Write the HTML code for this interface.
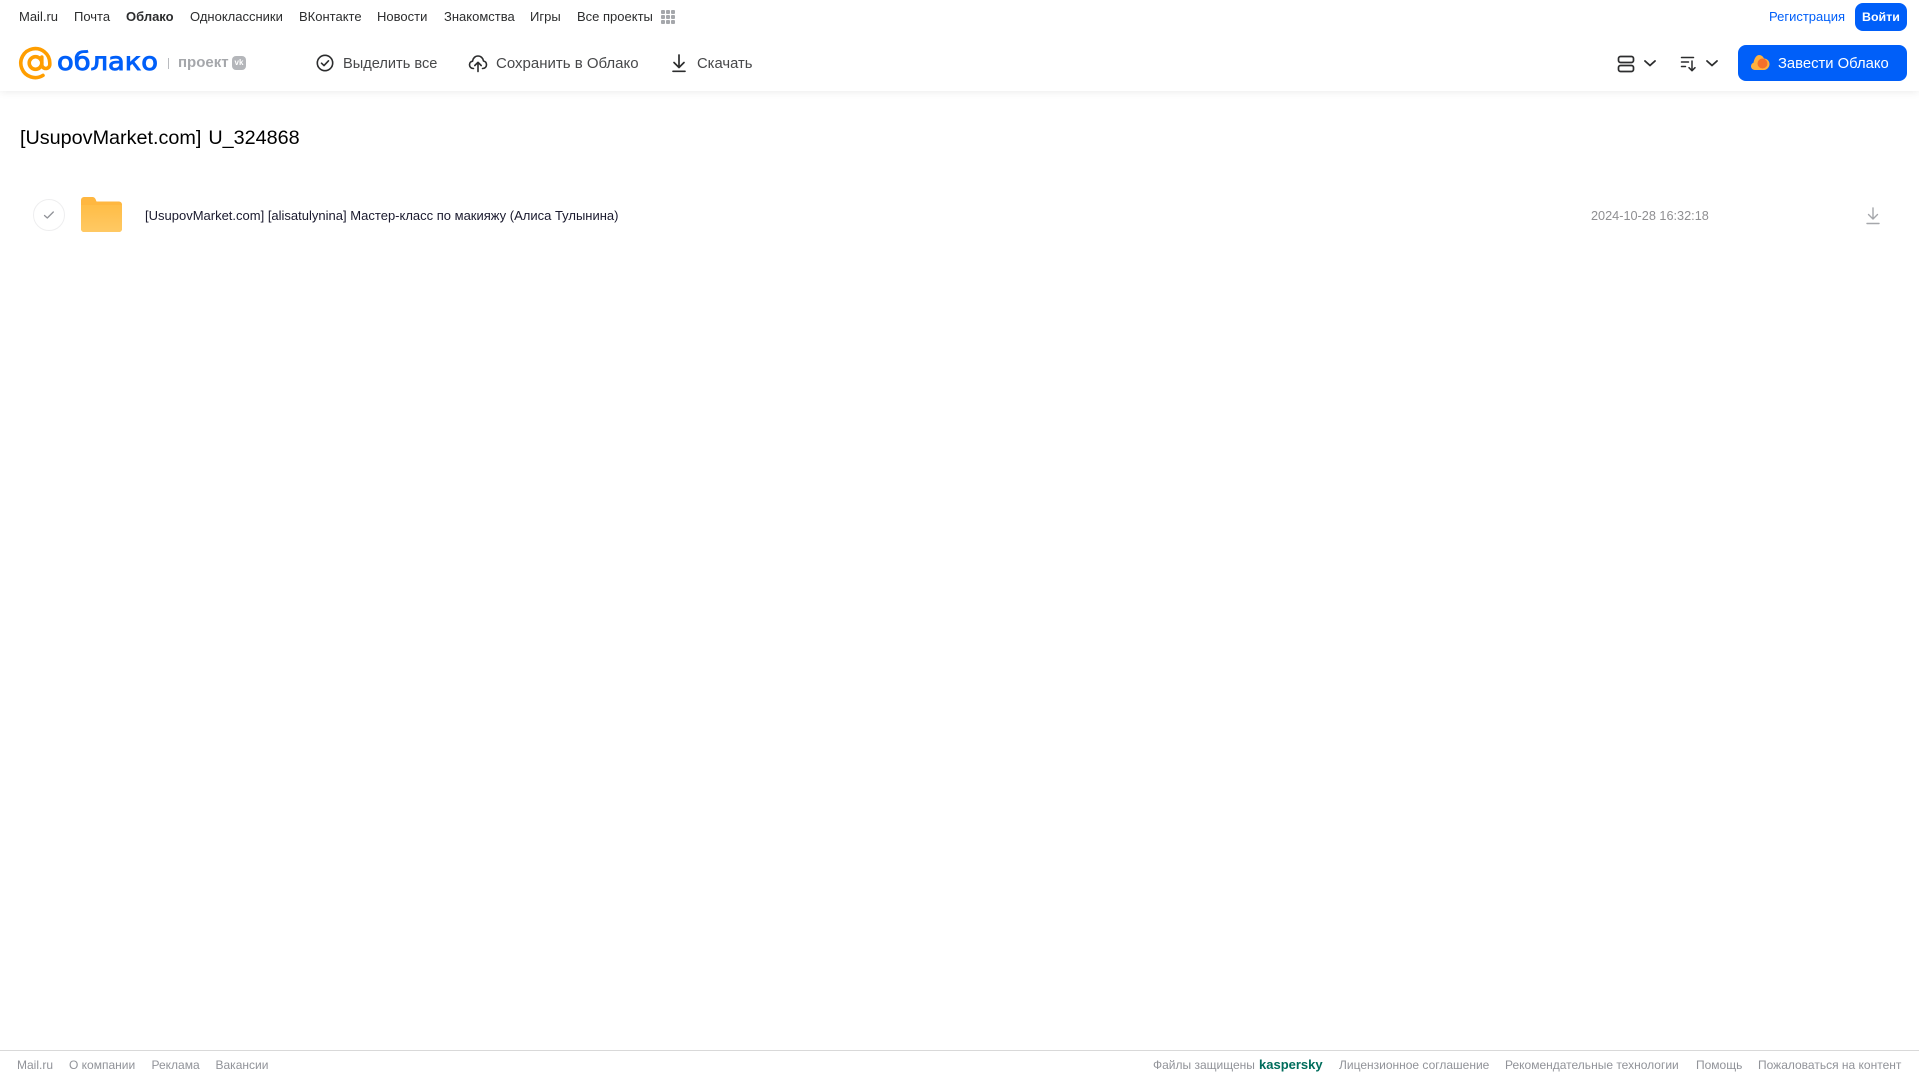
<!DOCTYPE html>
<html lang="ru">
<head>
<meta charset="utf-8">
<title>Облако</title>
<style>
html,body{margin:0;padding:0;width:1919px;height:1079px;overflow:hidden;background:#fff;font-family:"Liberation Sans",sans-serif}
.t{position:absolute;white-space:nowrap;line-height:20px}
.n{top:7px;font-size:13px;color:#2c2d2e}
.b{top:54px;font-size:14.8px;color:#47484a}
.f{top:1055px;font-size:12px;color:#919399}
svg{position:absolute;display:block}
#hdr{position:absolute;left:0;top:0;width:1919px;height:91px;background:#fff;box-shadow:0 1px 8px rgba(0,0,0,.08)}
</style>
</head>
<body>
<div id="hdr"></div>
<span class="t n" style="left:19px">Mail.ru</span>
<span class="t n" style="left:74px">Почта</span>
<span class="t n" style="left:126px;font-weight:bold">Облако</span>
<span class="t n" style="left:190px">Одноклассники</span>
<span class="t n" style="left:299px">ВКонтакте</span>
<span class="t n" style="left:377px">Новости</span>
<span class="t n" style="left:444px">Знакомства</span>
<span class="t n" style="left:530px">Игры</span>
<span class="t n" style="left:577px">Все проекты</span>
<svg style="left:660px;top:9px" width="16" height="16" viewBox="0 0 16 16" fill="#a5a7ab"><rect x="1" y="1" width="4" height="4" rx="1"/><rect x="6" y="1" width="4" height="4" rx="1"/><rect x="11" y="1" width="4" height="4" rx="1"/><rect x="1" y="6" width="4" height="4" rx="1"/><rect x="6" y="6" width="4" height="4" rx="1"/><rect x="11" y="6" width="4" height="4" rx="1"/><rect x="1" y="11" width="4" height="4" rx="1"/><rect x="6" y="11" width="4" height="4" rx="1"/><rect x="11" y="11" width="4" height="4" rx="1"/></svg>
<span class="t n" style="left:1769px;color:#005ff9">Регистрация</span>
<div style="position:absolute;left:1855px;top:3px;width:52px;height:28px;border-radius:8px;background:#005ff9"></div>
<span class="t n" style="left:1862px;color:#fff;font-weight:bold;top:7px;font-size:12.4px">Войти</span>

<svg style="left:18px;top:46px" width="35" height="35" viewBox="0 0 35 35" fill="none" stroke="#ff9e00" stroke-width="3.600" stroke-linecap="round"><circle cx="17.500" cy="17" r="6.300"/><path d="M23.800 11v7.500a4 4 0 0 0 8 0V17A14.500 14.500 0 1 0 25 29.400"/></svg>
<svg style="left:56px;top:42px" width="106" height="40" viewBox="0 0 106 40"><text x="1" y="28" font-family="DejaVu Sans, sans-serif" font-size="25" fill="#005ff9" stroke="#005ff9" stroke-width=".9" textLength="101" lengthAdjust="spacingAndGlyphs">облако</text></svg>
<div style="position:absolute;left:168px;top:58px;width:1px;height:11px;background:#b9bbbf"></div>
<span class="t" style="left:178px;top:53px;font-size:15px;font-weight:bold;color:#a5a7ab">проект</span>
<div style="position:absolute;left:232px;top:56px;width:14px;height:14px;border-radius:4px;background:#b4b6ba;color:#fff;font-size:8px;font-weight:bold;line-height:14px;text-align:center">vk</div>

<svg style="left:315px;top:53px" width="20" height="20" viewBox="0 0 20 20" fill="none" stroke="#2c2d2e" stroke-width="1.600"><circle cx="10" cy="10" r="7.700"/><path d="M6.500 10.200l2.500 2.400 4.500-4.800" stroke-linecap="round" stroke-linejoin="round"/></svg>
<span class="t b" style="left:343px;font-size:14.600px">Выделить все</span>
<svg style="left:468px;top:53px" width="20" height="20" viewBox="0 0 20 20" fill="none" stroke="#2c2d2e" stroke-width="1.600" stroke-linecap="round" stroke-linejoin="round"><path d="M5.500 15.500C3 15.500 1.500 13.800 1.500 11.800c0-1.800 1.200-3.300 3-3.600C5 5 7.300 3 10 3c2.800 0 5 2 5.500 5 1.800.4 3 1.900 3 3.800 0 2-1.500 3.700-4 3.700"/><path d="M10 18.500V9.500M6.800 12.500L10 9.300l3.200 3.200"/></svg>
<span class="t b" style="left:496px;font-size:15px">Сохранить в Облако</span>
<svg style="left:670px;top:53px" width="18" height="20" viewBox="0 0 18 20" fill="none" stroke="#2c2d2e" stroke-width="1.700" stroke-linecap="round" stroke-linejoin="round"><path d="M9 2v12M4 9.500L9 14.500l5-5M3 18.300h12"/></svg>
<span class="t b" style="left:697px">Скачать</span>

<svg style="left:1617px;top:55px" width="18" height="18" viewBox="0 0 18 18" fill="none" stroke="#2c2d2e" stroke-width="1.700"><rect x="1.500" y="1.500" width="15" height="6" rx="2"/><rect x="1.500" y="10.500" width="15" height="6" rx="2"/></svg>
<svg style="left:1643px;top:59px" width="14" height="9" viewBox="0 0 14 9" fill="none" stroke="#2c2d2e" stroke-width="1.800" stroke-linecap="round" stroke-linejoin="round"><path d="M2 2l5 4.500L12 2"/></svg>
<svg style="left:1680px;top:55px" width="18" height="18" viewBox="0 0 18 18" fill="none" stroke="#2c2d2e" stroke-width="1.500" stroke-linecap="round" stroke-linejoin="round"><path d="M1.500 2.500h12M1.500 7h7M1.500 11.500h4M12 6v9.500M9 12.700l3 3 3-3"/></svg>
<svg style="left:1705px;top:59px" width="14" height="9" viewBox="0 0 14 9" fill="none" stroke="#2c2d2e" stroke-width="1.800" stroke-linecap="round" stroke-linejoin="round"><path d="M2 2l5 4.500L12 2"/></svg>
<div style="position:absolute;left:1738px;top:45px;width:169px;height:36px;border-radius:8px;background:#005ff9"></div>
<svg style="left:1750px;top:54px" width="20" height="18" viewBox="0 0 20 18"><path d="M5 16C2.500 16 1 14.300 1 12.300c0-1.700 1-3 2.500-3.500C4 5.500 6 1 9 1c2.500 0 4 1.500 5 3.500 3 0 5.500 2.500 5.500 5.500S17 16 14 16z" fill="#ffb13d"/><circle cx="12.500" cy="9.500" r="5" fill="#f4702a"/></svg>
<span class="t b" style="left:1778px;color:#fff">Завести Облако</span>

<span class="t" style="left:20px;top:127px;font-size:19.800px;line-height:22px;color:#000;word-spacing:1.500px">[UsupovMarket.com] U_324868</span>

<div style="position:absolute;left:33px;top:199px;width:30px;height:30px;border:1px solid #eeeeef;border-radius:50%"></div>
<svg style="left:42px;top:209px" width="14" height="12" viewBox="0 0 14 12" fill="none" stroke="#919399" stroke-width="1.300" stroke-linecap="round" stroke-linejoin="round"><path d="M2.500 6.500l2.800 2.500 6-6"/></svg>
<svg style="left:81px;top:197px" width="41" height="35" viewBox="0 0 41 35"><defs><linearGradient id="fg" x1="0" y1="0" x2="0" y2="1"><stop offset="0" stop-color="#ffbd47"/><stop offset="1" stop-color="#ffc964"/></linearGradient></defs><path d="M0 3a3 3 0 0 1 3-3h8c2 0 2.500.5 3.500 2l1 2.500H38a3 3 0 0 1 3 3V32a3 3 0 0 1-3 3H3a3 3 0 0 1-3-3z" fill="#ffb740"/><path d="M0 8h41v24a3 3 0 0 1-3 3H3a3 3 0 0 1-3-3z" fill="url(#fg)"/></svg>
<span class="t" style="left:145px;top:206px;font-size:13px;color:#1a1a2e">[UsupovMarket.com] [alisatulynina] Мастер-класс по макияжу (Алиса Тулынина)</span>
<span class="t" style="left:1591px;top:206px;font-size:12.700px;color:#8f8f92">2024-10-28 16:32:18</span>
<svg style="left:1865px;top:206px" width="16" height="19" viewBox="0 0 16 19" fill="none" stroke="#a5a7ab" stroke-width="1.400" stroke-linecap="round" stroke-linejoin="round"><path d="M8 2v11M3.500 8.500L8 13l4.500-4.500M2 17.500h12"/></svg>

<div style="position:absolute;left:0;top:1050px;width:1919px;height:1px;background:#d9d9d9"></div>
<span class="t f" style="left:17px">Mail.ru</span>
<span class="t f" style="left:69px">О компании</span>
<span class="t f" style="left:151.500px">Реклама</span>
<span class="t f" style="left:215.500px">Вакансии</span>
<span class="t f" style="left:1153px">Файлы защищены</span>
<span class="t f" style="left:1259px;color:#006d5c;font-weight:bold;font-size:13px">kaspersky</span>
<span class="t f" style="left:1339px">Лицензионное соглашение</span>
<span class="t f" style="left:1505px">Рекомендательные технологии</span>
<span class="t f" style="left:1696px">Помощь</span>
<span class="t f" style="left:1758px">Пожаловаться на контент</span>
</body>
</html>
